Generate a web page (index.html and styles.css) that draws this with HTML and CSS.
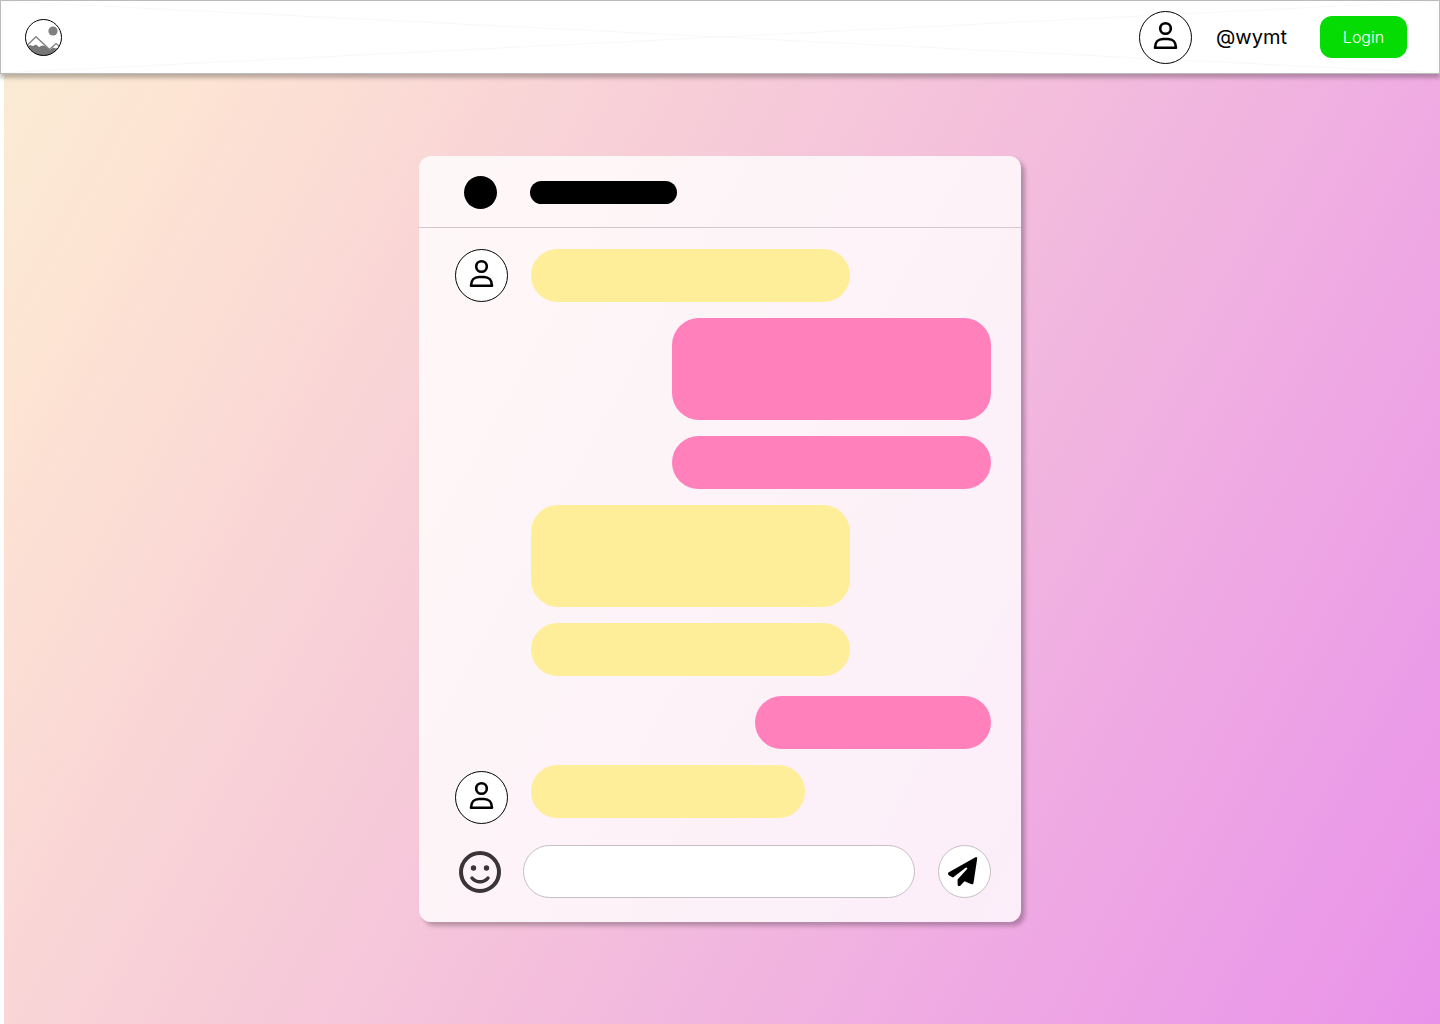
FILE: index.html
```html
<!DOCTYPE html>
<html lang="en">
<head>
    <meta charset="UTF-8">
    <meta name="viewport" content="width=device-width, initial-scale=1.0">
    <title>Chat</title>
    <link rel="stylesheet" href="styles.css">
</head>
<body>
    <svg class="symbols" aria-hidden="true">
        <symbol id="user" viewBox="0 0 51 51">
            <g fill="none" stroke="#000" stroke-width="2.6" stroke-linejoin="round">
                <circle cx="25.5" cy="16.5" r="5.3"/>
                <path d="M15 35.7 C15 30 18.5 27 23 27 H28 C32.5 27 36 30 36 35.7 Z"/>
            </g>
        </symbol>
    </svg>

    <header class="topbar">
        <svg class="cross" preserveAspectRatio="none" viewBox="0 0 100 100" aria-hidden="true">
            <path d="M0 0 L100 100 M0 100 L100 0"/>
        </svg>
        <a href="#" class="logo" aria-label="Home">
            <svg viewBox="0 0 37 37">
                <clipPath id="round"><circle cx="18.5" cy="18.5" r="18"/></clipPath>
                <g clip-path="url(#round)">
                    <circle cx="28" cy="12" r="4.6" fill="#808080"/>
                    <path d="M1 28 L5 26 L8 27 L11 25.5 L14 28 L17 26.5 L20 27 L25 31 L28 28.5 L31 29.5 L34 28 L37 30 V37 H0 Z" fill="#777"/>
                    <path d="M1 27.5 L11 17.7 L24.5 30.5 L31 24.5 L36 28.5" fill="none" stroke="#808080" stroke-width="1.3"/>
                </g>
                <circle cx="18.5" cy="18.5" r="18" fill="none" stroke="#000"/>
            </svg>
        </a>
        <div class="account">
            <span class="avatar"><svg><use href="#user"/></svg></span>
            <span class="username">@wymt</span>
            <button class="login" type="button">Login</button>
        </div>
    </header>

    <main class="page">
        <section class="chat">
            <div class="chat-header">
                <span class="dot"></span>
                <span class="name"></span>
            </div>
            <div class="messages">
                <div class="row">
                    <span class="avatar"><svg><use href="#user"/></svg></span>
                    <div class="bubble"></div>
                </div>
                <div class="row mine"><div class="bubble tall"></div></div>
                <div class="row mine"><div class="bubble"></div></div>
                <div class="row indent"><div class="bubble tall"></div></div>
                <div class="row indent"><div class="bubble"></div></div>
                <div class="row mine later"><div class="bubble short"></div></div>
                <div class="row last">
                    <span class="avatar"><svg><use href="#user"/></svg></span>
                    <div class="bubble medium"></div>
                </div>
            </div>
            <form class="composer">
                <button class="emoji" type="button" aria-label="Emoji">
                    <svg viewBox="0 0 42 42">
                        <circle cx="21" cy="21" r="19" fill="none" stroke="#3b3436" stroke-width="4"/>
                        <circle cx="14.5" cy="17" r="2.7" fill="#3b3436"/>
                        <circle cx="27.5" cy="17" r="2.7" fill="#3b3436"/>
                        <path d="M13 27 C17 32 25 32 29 27" fill="none" stroke="#3b3436" stroke-width="3.5" stroke-linecap="round"/>
                    </svg>
                </button>
                <input class="message-input" type="text" aria-label="Message">
                <button class="send" type="button" aria-label="Send">
                    <svg viewBox="0 0 51 51">
                        <path d="M36.5 11.2 Q38.3 10.6 38.2 12.6 L34.5 37 Q34.2 38.8 32.5 38.2 L25.5 35.2 L21.3 39.7 Q19 41 18.6 38.6 L18.6 33.5 L28.3 22.8 Q28.2 21 26.3 21.9 L14 31.5 L10 29.5 Q8 27.5 9.8 26.3 Z"/>
                    </svg>
                </button>
            </form>
        </section>
    </main>
</body>
</html>
```

FILE: styles.css
```css
* {
    box-sizing: border-box;
}
body {
    margin: 0;
    min-height: 100vh;
    display: flex;
    flex-direction: column;
    font-family: Inter, "Liberation Sans", sans-serif;
    color: #000;
    background-color: white;
}
button {
    padding: 0;
    cursor: pointer;
    font-family: inherit;
}
svg {
    display: block;
    width: 100%;
    height: 100%;
}
.symbols {
    position: absolute;
    width: 0;
    height: 0;
}
.topbar {
    position: relative;
    display: flex;
    align-items: center;
    justify-content: space-between;
    height: 74px;
    padding: 0 32px 0 24px;
    background-color: white;
    border: 1px solid #bbb;
    box-shadow: 0 4px 4px rgba(0,0,0,0.25);
}
.cross {
    position: absolute;
    inset: 0;
}
.cross path {
    fill: none;
    stroke: #f9f9f9;
    vector-effect: non-scaling-stroke;
}
.logo {
    position: relative;
    width: 37px;
    height: 37px;
}
.account {
    position: relative;
    display: flex;
    align-items: center;
}
.avatar {
    flex: none;
    width: 53px;
    height: 53px;
    border: 1px solid #000;
    border-radius: 50%;
    background-color: white;
}
.username {
    margin: 0 33px 0 24px;
    font-size: 20px;
    line-height: 24px;
}
.login {
    width: 87px;
    height: 42px;
    border: none;
    border-radius: 12px;
    background-color: #04dc04;
    color: white;
    font-size: 16px;
    font-weight: 300;
}
.page {
    flex: 1;
    margin-left: 4px;
    padding: 82px 4px 102px 0;
    background: linear-gradient(119deg, #faebd4 0%, #fde4d3 10%, #f4c1db 50%, #e992ea 100%);
}
.chat {
    max-width: 602px;
    margin: 0 auto;
    border-radius: 12px;
    background-color: rgba(255,255,255,0.8);
    box-shadow: 4px 4px 4px rgba(0,0,0,0.25);
}
.chat-header {
    display: flex;
    align-items: center;
    gap: 33px;
    height: 72px;
    padding: 2px 45px 0;
    border-bottom: 1px solid #d2c8cd;
}
.dot {
    width: 33px;
    height: 33px;
    border-radius: 50%;
    background-color: #000;
}
.name {
    width: 147px;
    height: 23px;
    border-radius: 12px;
    background-color: #000;
}
.messages {
    display: flex;
    flex-direction: column;
    gap: 16px;
    padding: 21px 30px 21px 36px;
}
.row {
    display: flex;
    gap: 23px;
}
.indent {
    padding-left: 76px;
}
.mine {
    justify-content: flex-end;
}
.later {
    margin-top: 4px;
}
.last .avatar {
    margin-top: 6px;
}
.bubble {
    width: 319px;
    height: 53px;
    border-radius: 27px;
    background-color: #ffee99;
}
.mine .bubble {
    background-color: #ff80bb;
}
.bubble.tall {
    height: 102px;
}
.bubble.medium {
    width: 274px;
}
.bubble.short {
    width: 236px;
}
.composer {
    display: flex;
    align-items: center;
    padding: 0 30px 24px 40px;
}
.emoji {
    flex: none;
    width: 42px;
    height: 42px;
    border: none;
    background: none;
}
.message-input {
    flex: 1;
    min-width: 0;
    height: 53px;
    margin: 0 23px 0 22px;
    padding: 0 24px;
    border: 1px solid #c4bfc4;
    border-radius: 27px;
    background-color: white;
    font-family: inherit;
    font-size: 16px;
}
.send {
    flex: none;
    width: 53px;
    height: 53px;
    border: 1px solid #c4bfc4;
    border-radius: 50%;
    background-color: white;
}
```
